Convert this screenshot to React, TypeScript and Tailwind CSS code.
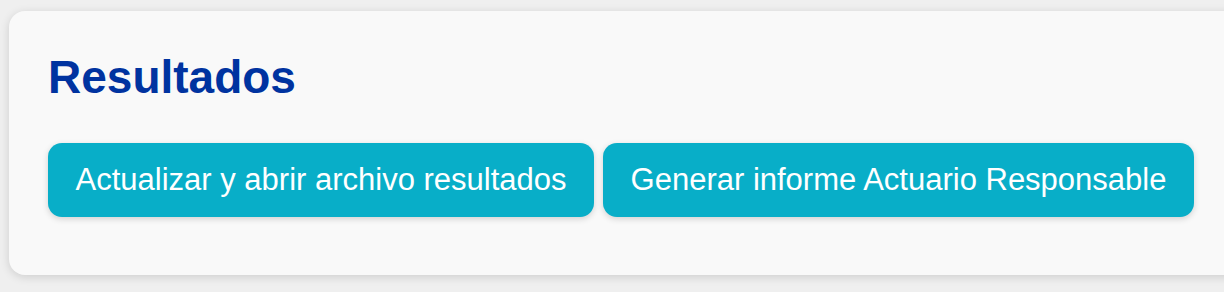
import React from "react";

export default function App() {
  return (
    <div
      className="w-[1224px] h-[292px] overflow-hidden bg-[#efefef] pl-[9px] pt-[11px]"
      style={{ fontFamily: '"Liberation Sans", Arial, Helvetica, sans-serif' }}
    >
      <div className="w-[1240px] h-[264px] rounded-[16px] bg-[#f9f9f9] shadow-[0_2px_10px_rgba(0,0,0,0.14)] pl-[39px] pt-[40px]">
        <h1 className="text-[46px] leading-[52px] font-bold text-[#0033a0]">Resultados</h1>
        <div className="mt-[40px] flex gap-[9px]">
          <button className="rounded-[14px] bg-[#08aec8] px-[27.5px] py-[19px] text-[31px] leading-[36px] text-white shadow-[0_2px_6px_rgba(0,0,0,0.16)]">
            Actualizar y abrir archivo resultados
          </button>
          <button className="rounded-[14px] bg-[#08aec8] px-[27.5px] py-[19px] text-[31px] leading-[36px] text-white shadow-[0_2px_6px_rgba(0,0,0,0.16)]">
            Generar informe Actuario Responsable
          </button>
        </div>
      </div>
    </div>
  );
}
